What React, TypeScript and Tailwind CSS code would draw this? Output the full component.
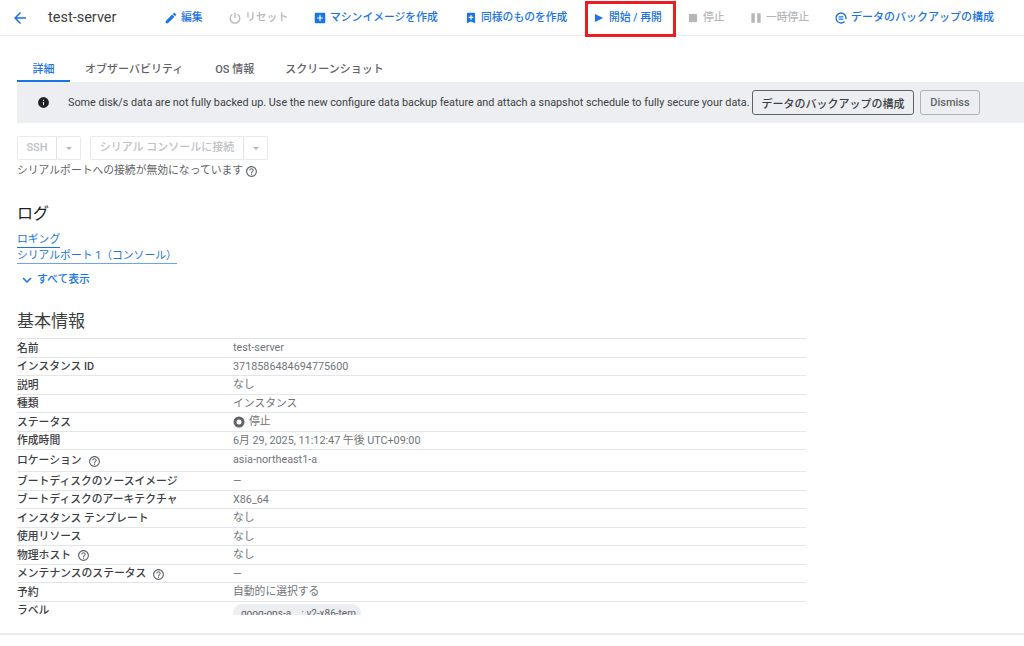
const FONT = "[font-family:Roboto,'Noto_Sans_CJK_JP',sans-serif]";

function Help({ size = 13 }: { size?: number }) {
  return (
    <svg width={size} height={size} viewBox="0 0 24 24" fill="#5f6368" className="shrink-0">
      <path d="M11 18h2v-2h-2v2zm1-16C6.48 2 2 6.48 2 12s4.48 10 10 10 10-4.48 10-10S17.52 2 12 2zm0 18c-4.41 0-8-3.59-8-8s3.59-8 8-8 8 3.59 8 8-3.59 8-8 8zm0-14c-2.21 0-4 1.79-4 4h2c0-1.1.9-2 2-2s2 .9 2 2c0 2-3 1.75-3 5h2c0-2.25 3-2.5 3-5 0-2.21-1.79-4-4-4z" />
    </svg>
  );
}

function Action({ icon, label, disabled, className }: { icon: React.ReactNode; label: string; disabled?: boolean; className?: string }) {
  return (
    <div className={`flex items-center gap-[3px] text-[10.8px] font-medium whitespace-nowrap ${disabled ? "text-[#b4b7ba]" : "text-[#1a73e8]"} ${className ?? ""}`}>
      {icon}
      <span className="pt-[2px]">{label}</span>
    </div>
  );
}

const ic = { width: 14, height: 14, viewBox: "0 0 24 24", fill: "currentColor" };

const rows: { k: string; v: React.ReactNode; help?: boolean; tall?: boolean }[] = [
  { k: "名前", v: "test-server" },
  { k: "インスタンス ID", v: "3718586484694775600" },
  { k: "説明", v: "なし" },
  { k: "種類", v: "インスタンス" },
  {
    k: "ステータス",
    v: (
      <span className="flex items-center gap-[4px]">
        <svg width="12" height="12" viewBox="0 0 12 12"><circle cx="6" cy="6" r="4" fill="none" stroke="#5f6368" strokeWidth="3" /></svg>
        停止
      </span>
    ),
  },
  { k: "作成時間", v: "6月 29, 2025, 11:12:47 午後 UTC+09:00" },
  { k: "ロケーション", v: "asia-northeast1-a", help: true, tall: true },
  { k: "ブートディスクのソースイメージ", v: "—" },
  { k: "ブートディスクのアーキテクチャ", v: "X86_64" },
  { k: "インスタンス テンプレート", v: "なし" },
  { k: "使用リソース", v: "なし" },
  { k: "物理ホスト", v: "なし", help: true },
  { k: "メンテナンスのステータス", v: "—", help: true },
  { k: "予約", v: "自動的に選択する" },
];

export default function App() {
  return (
    <div className={`w-[1024px] h-[646px] relative overflow-hidden bg-white text-[#3c4043] ${FONT}`}>
      <header className="h-[36px] border-b border-[#e8eaed] flex items-center">
        <svg width="18" height="18" viewBox="0 0 24 24" fill="#1a73e8" className="ml-[11px]">
          <path d="M20 11H7.83l5.59-5.59L12 4l-8 8 8 8 1.41-1.41L7.83 13H20v-2z" />
        </svg>
        <div className="ml-[19px] w-[116px] text-[14.5px] text-[#3c4043]">test-server</div>
        <Action className="w-[64px]" label="編集" icon={<svg {...ic}><path d="M3 17.25V21h3.75L17.81 9.94l-3.75-3.75L3 17.25zM20.71 7.04a1 1 0 0 0 0-1.41l-2.34-2.34a1 1 0 0 0-1.41 0l-1.83 1.83 3.75 3.75 1.83-1.83z" /></svg>} />
        <Action className="w-[85px]" disabled label="リセット" icon={<svg width="14" height="14" viewBox="0 0 24 24" fill="none" stroke="currentColor" strokeWidth="2.2"><path d="M12 2.5v9" /><path d="M7.5 5.6a8.3 8.3 0 1 0 9 0" /></svg>} />
        <Action className="w-[151px]" label="マシンイメージを作成" icon={<svg {...ic}><path d="M19 3H5a2 2 0 0 0-2 2v14a2 2 0 0 0 2 2h14a2 2 0 0 0 2-2V5a2 2 0 0 0-2-2zm-2 10h-4v4h-2v-4H7v-2h4V7h2v4h4v2z" /></svg>} />
        <Action className="w-[128px]" label="同様のものを作成" icon={<svg {...ic}><path d="M17 3H7a2 2 0 0 0-2 2v16l7-3 7 3V5a2 2 0 0 0-2-2zm-1 9h-3v3h-2v-3H8v-2h3V7h2v3h3v2z" /></svg>} />
        <Action className="w-[94px]" label="開始 / 再開" icon={<svg {...ic}><path d="M5 5v14l14-7z" /></svg>} />
        <Action className="w-[63px]" disabled label="停止" icon={<svg {...ic}><path d="M5 5h14v14H5z" /></svg>} />
        <Action className="w-[85px]" disabled label="一時停止" icon={<svg {...ic}><path d="M4 4h6v16H4zm10 0h6v16h-6z" /></svg>} />
        <div className="flex items-center gap-[3px] text-[11px] font-medium whitespace-nowrap text-[#1a73e8]">
          <svg width="14" height="14" viewBox="0 0 24 24" fill="none" stroke="currentColor" strokeWidth="2.4"><path d="M12 3.5a8.5 8.5 0 1 0 6 14.5" /><path d="M12 3.5a8.5 8.5 0 0 1 8.5 8.5v2" /><path d="M8 10h8M8 14h8" /></svg>
          <span className="pt-[2px]">データのバックアップの構成</span>
        </div>
      </header>

      <div className="absolute left-[585px] top-[1px] w-[91px] h-[36px] border-[3px] border-[#ed1c24]" />

      <div className="pl-[17px]">
        <nav className="h-[46px] flex items-end text-[11px] font-medium text-[#5f6368]">
          <div className="w-[53px] h-[27px] pt-[7px] text-center text-[#1a73e8] border-b-2 border-[#1a73e8]">詳細</div>
          <div className="ml-[15px] h-[27px] pt-[7px]">オブザーバビリティ</div>
          <div className="ml-[32px] h-[27px] pt-[7px]">OS 情報</div>
          <div className="ml-[31px] h-[27px] pt-[7px]">スクリーンショット</div>
        </nav>

        <div className="h-[41px] bg-[#eceef1] flex items-center text-[10.8px] text-[#3c4043] whitespace-nowrap">
          <svg width="13" height="13" viewBox="0 0 24 24" fill="#202124" className="ml-[20px]">
            <path d="M12 2a10 10 0 1 0 0 20 10 10 0 0 0 0-20zm1 15h-2v-6h2v6zm0-8h-2V7h2v2z" />
          </svg>
          <span className="ml-[18px] w-[684px] pt-[2px]">Some disk/s data are not fully backed up. Use the new configure data backup feature and attach a snapshot schedule to fully secure your data.</span>
          <div className="h-[25px] w-[162px] border border-[#5f6368] rounded-[3px] flex items-center justify-center pt-[5px] text-[11px] font-medium text-[#3c4043]">データのバックアップの構成</div>
          <div className="ml-[6px] h-[25px] w-[60px] border border-[#aeb1b5] rounded-[3px] flex items-center justify-center pt-[1px] text-[11px] font-medium text-[#5f6368]">Dismiss</div>
        </div>

        <div className="mt-[13px] flex gap-[9px] text-[11px] font-medium text-[#c0c2c5]">
          <div className="flex h-[24px] border border-[#e8eaed] rounded-[2px]">
            <div className="w-[39px] flex items-center justify-center border-r border-[#e0e2e5]">SSH</div>
            <div className="w-[23px] flex items-center justify-center"><span className="border-x-[3px] border-t-[3px] border-x-transparent border-t-[#b4b7ba]" /></div>
          </div>
          <div className="flex h-[24px] border border-[#e8eaed] rounded-[2px]">
            <div className="w-[153px] flex items-center justify-center border-r border-[#e0e2e5]">シリアル コンソールに接続</div>
            <div className="w-[23px] flex items-center justify-center"><span className="border-x-[3px] border-t-[3px] border-x-transparent border-t-[#b4b7ba]" /></div>
          </div>
        </div>

        <div className="mt-[3px] flex items-center gap-[2px] text-[10.8px] text-[#5f6368] h-[16px]">
          シリアルポートへの接続が無効になっています <Help />
        </div>

        <h2 className="mt-[23px] text-[16px] leading-[24px] text-[#202124]">ログ</h2>

        <div className="mt-[7px] flex flex-col items-start text-[10.8px] text-[#1a73e8]">
          <div className="h-[15px] leading-[14px] border-b border-[#1a73e8]">ロギング</div>
          <div className="h-[15px] mt-[1px] leading-[14px] border-b border-[#6ea4ee]">シリアルポート 1（コンソール）</div>
        </div>

        <div className="mt-[8px] ml-[1px] flex items-center gap-[1px] text-[10.8px] font-medium text-[#1a73e8] h-[16px]">
          <svg width="18" height="18" viewBox="0 0 24 24" fill="currentColor"><path d="M7.41 8.59 12 13.17l4.59-4.58L18 10l-6 6-6-6z" /></svg>
          すべて表示
        </div>

        <h2 className="mt-[21px] text-[17px] leading-[24px] text-[#3c4043]">基本情報</h2>

        <div className="mt-[5px] w-[789px] h-[277px] overflow-hidden border-t border-[#dfe1e5] text-[10.8px]">
          {rows.map((r) => (
            <div key={r.k} className={`flex border-b border-[#e3e5e8] ${r.tall ? "h-[22px]" : "h-[18.5px]"}`}>
              <div className="w-[216px] flex items-center gap-[6px] pt-[2px] font-medium text-[#3c4043] whitespace-nowrap">
                {r.k}
                {r.help && <Help />}
              </div>
              <div className={`flex text-[#70757a] whitespace-nowrap ${r.tall ? "pt-[2px]" : "items-center pt-[1px]"}`}>{r.v}</div>
            </div>
          ))}
          <div className="flex h-[18.5px]">
            <div className="w-[216px] font-medium pt-[1px]">ラベル</div>
            <div className="h-[18px] mt-[2px] w-[128px] rounded-full bg-[#eceef1] text-[10px] text-[#5f6368] pt-[2px] pl-[8px] whitespace-nowrap">goog-ops-a... : v2-x86-tem...</div>
          </div>
        </div>
      </div>

      <div className="absolute left-0 right-0 top-[633px] h-[2px] bg-[#e8eaed]" />
    </div>
  );
}
